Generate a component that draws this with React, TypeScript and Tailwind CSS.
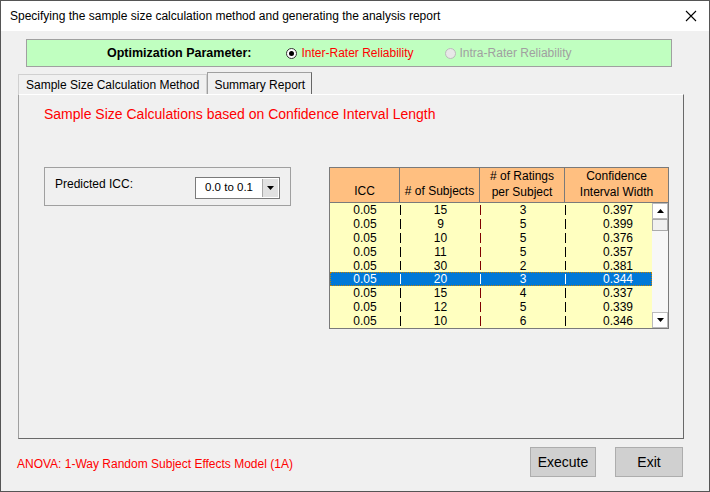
import React from "react";

const rows = [
  ["0.05", "15", "3", "0.397"],
  ["0.05", "9", "5", "0.399"],
  ["0.05", "10", "5", "0.376"],
  ["0.05", "11", "5", "0.357"],
  ["0.05", "30", "2", "0.381"],
  ["0.05", "20", "3", "0.344"],
  ["0.05", "15", "4", "0.337"],
  ["0.05", "12", "5", "0.339"],
  ["0.05", "10", "6", "0.346"],
];

export default function App() {
  const f = { fontFamily: "'Liberation Sans', Arial, sans-serif" };
  return (
    <div className="w-[710px] h-[492px] bg-[#f0f0f0] border border-[#555] flex flex-col text-[12px] text-black overflow-hidden" style={f}>
      <div className="h-[30px] bg-white flex items-center justify-between pl-[9px] pr-[12px] shrink-0">
        <span className="text-[12px]">Specifying the sample size calculation method and generating the analysis report</span>
        <svg width="12" height="12" viewBox="0 0 12 12"><path d="M1 1L11 11M11 1L1 11" stroke="#000" strokeWidth="1.1" /></svg>
      </div>
      <div className="ml-[25px] mt-[8px] w-[646px] h-[28px] bg-[#c0ffc0] border border-[#a0a0a0] flex items-center">
        <span className="ml-[80px] font-bold text-[12.5px]">Optimization Parameter:</span>
        <span className="ml-[35px] flex items-center gap-[4px] text-[#ff0000]">
          <span className="w-[11px] h-[11px] rounded-full border border-[#333] bg-white flex items-center justify-center"><span className="w-[5px] h-[5px] rounded-full bg-black" /></span>
          Inter-Rater Reliability
        </span>
        <span className="ml-[31px] flex items-center gap-[4px] text-[#a0a0a0]">
          <span className="w-[11px] h-[11px] rounded-full border border-[#bbb] bg-[#e8e8e8]" />
          Intra-Rater Reliability
        </span>
      </div>
      <div className="ml-[17px] mt-[5px] flex items-end h-[22px]">
        <div className="h-[20px] px-[7px] flex items-center border border-b-0 border-[#d0d0d0] bg-[#f0f0f0]">Sample Size Calculation Method</div>
        <div className="h-[22px] px-[6px] flex items-start pt-[3px] border border-b-0 border-[#a0a0a0] border-r-[#666] bg-[#f0f0f0]">Summary Report</div>
      </div>
      <div className="ml-[17px] w-[666px] h-[345px] border border-[#a0a0a0] border-t-white border-r-[#696969] border-b-[#696969] flex flex-col">
        <div className="ml-[25px] mt-[9px] text-[#ff0000] text-[14px]">Sample Size Calculations based on Confidence Interval Length</div>
        <div className="flex mt-[42px]">
          <div className="ml-[25px] w-[247px] h-[39px] border border-[#a0a0a0] flex items-center justify-between px-[10px]">
            <span className="-mt-[6px]">Predicted ICC:</span>
            <div className="w-[85px] h-[22px] border border-[#7a7a7a] bg-white flex items-center mt-[3px]">
              <span className="flex-1 text-center text-[11.5px]">0.0 to 0.1</span>
              <div className="w-[16px] h-[18px] mr-[1px] bg-[#e1e1e1] border-l border-[#aaa] flex items-center justify-center">
                <svg width="7" height="4"><path d="M0 0H7L3.5 4Z" fill="#000" /></svg>
              </div>
            </div>
          </div>
          <div className="ml-[38px] w-[340px] border border-[#7a7a7a] flex flex-col">
            <div className="h-[35px] bg-[#ffbf80] flex border-b border-[#7a7a7a] text-[12px]">
              <div className="w-[70px] border-r border-[#7a7a7a] flex items-end justify-center pb-[2px]">ICC</div>
              <div className="w-[80px] border-r border-[#7a7a7a] flex items-end justify-center pb-[2px] whitespace-nowrap"># of Subjects</div>
              <div className="w-[85px] border-r border-[#7a7a7a] flex flex-col items-center justify-end pb-[2px] leading-[16px]"><span># of Ratings</span><span>per Subject</span></div>
              <div className="flex-1 flex flex-col items-center justify-end pb-[2px] leading-[16px]"><span>Confidence</span><span>Interval Width</span></div>
            </div>
            <div className="flex h-[125px]">
              <div className="w-[322px] bg-[#ffffc0] flex flex-col">
                {rows.map((r, i) => {
                  const sel = i === 5;
                  return (
                    <div key={i} className={`h-[13.9px] flex leading-[14px] ${sel ? "bg-[#0078d7] text-white outline-1 outline-dotted outline-[#c08000] -outline-offset-1" : ""}`}>
                      <div className="w-[70px] text-center">{r[0]}</div>
                      <div className={`w-[80px] text-center border-l ${sel ? "border-white" : "border-black"} my-[2px] leading-[10px]`}>{r[1]}</div>
                      <div className={`w-[85px] text-center border-l ${sel ? "border-white" : "border-[#800000]"} my-[2px] leading-[10px]`}>{r[2]}</div>
                      <div className={`flex-1 text-center pl-[18px] border-l ${sel ? "border-white" : "border-black"} my-[2px] leading-[10px]`}>{r[3]}</div>
                    </div>
                  );
                })}
              </div>
              <div className="flex-1 bg-[#f0f0f0] flex flex-col">
                <div className="h-[16px] border border-[#bbb] bg-white flex items-center justify-center"><svg width="7" height="4"><path d="M0 4H7L3.5 0Z" fill="#000" /></svg></div>
                <div className="h-[12px] border border-[#aaa] bg-[#f0f0f0]" />
                <div className="flex-1 bg-[#f7f7f7]" />
                <div className="h-[16px] border border-[#bbb] bg-white flex items-center justify-center"><svg width="7" height="4"><path d="M0 0H7L3.5 4Z" fill="#000" /></svg></div>
              </div>
            </div>
          </div>
        </div>
      </div>
      <div className="flex items-center mt-[8px]">
        <span className="ml-[16px] text-[#ff0000] text-[12px] mt-[4px]">ANOVA: 1-Way Random Subject Effects Model (1A)</span>
        <div className="ml-auto w-[66px] h-[30px] bg-[#d0d0d0] border border-[#adadad] flex items-center justify-center text-[14px]">Execute</div>
        <div className="ml-[19px] mr-[26px] w-[68px] h-[30px] bg-[#d0d0d0] border border-[#adadad] flex items-center justify-center text-[14px]">Exit</div>
      </div>
    </div>
  );
}
